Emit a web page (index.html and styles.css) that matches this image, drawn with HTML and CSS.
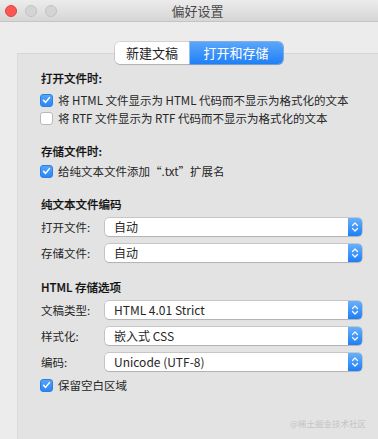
FILE: index.html
```html
<!DOCTYPE html>
<html lang="zh-CN">
<head>
<meta charset="utf-8">
<title>偏好设置</title>
<link rel="stylesheet" href="styles.css">
</head>
<body>
<div class="window">
  <header class="titlebar">
    <div class="lights">
      <span class="light red"></span>
      <span class="light"></span>
      <span class="light"></span>
    </div>
    <div class="title">偏好设置</div>
  </header>
  <div class="content">
    <div class="tabs">
      <span class="tab">新建文稿</span>
      <span class="tab active">打开和存储</span>
    </div>
    <div class="panel">
      <h3 class="heading">打开文件时:</h3>
      <div class="check"><span class="box on"><svg viewBox="0 0 12 12" width="12" height="12"><path d="M2.8 6.3 L5 8.6 L9.2 3.4" fill="none" stroke="#fff" stroke-width="1.7" stroke-linecap="round" stroke-linejoin="round"/></svg></span>将 HTML 文件显示为 HTML 代码而不显示为格式化的文本</div>
      <div class="check"><span class="box"></span>将 RTF 文件显示为 RTF 代码而不显示为格式化的文本</div>

      <h3 class="heading sec">存储文件时:</h3>
      <div class="check tight"><span class="box on"><svg viewBox="0 0 12 12" width="12" height="12"><path d="M2.8 6.3 L5 8.6 L9.2 3.4" fill="none" stroke="#fff" stroke-width="1.7" stroke-linecap="round" stroke-linejoin="round"/></svg></span>给纯文本文件添加“.txt”扩展名</div>

      <h3 class="heading sec2">纯文本文件编码</h3>
      <div class="form">
        <div class="row first"><span class="label">打开文件:</span><div class="select"><span class="value">自动</span><span class="stepper"><svg viewBox="0 0 14 18" width="14" height="18"><path d="M4.5 7.5 L7 5 L9.5 7.5 M4.5 10.5 L7 13 L9.5 10.5" fill="none" stroke="#fff" stroke-width="1.2" stroke-linecap="round" stroke-linejoin="round"/></svg></span></div></div>
        <div class="row"><span class="label">存储文件:</span><div class="select"><span class="value">自动</span><span class="stepper"><svg viewBox="0 0 14 18" width="14" height="18"><path d="M4.5 7.5 L7 5 L9.5 7.5 M4.5 10.5 L7 13 L9.5 10.5" fill="none" stroke="#fff" stroke-width="1.2" stroke-linecap="round" stroke-linejoin="round"/></svg></span></div></div>
      </div>

      <h3 class="heading sec3">HTML 存储选项</h3>
      <div class="form">
        <div class="row first"><span class="label">文稿类型:</span><div class="select"><span class="value">HTML 4.01 Strict</span><span class="stepper"><svg viewBox="0 0 14 18" width="14" height="18"><path d="M4.5 7.5 L7 5 L9.5 7.5 M4.5 10.5 L7 13 L9.5 10.5" fill="none" stroke="#fff" stroke-width="1.2" stroke-linecap="round" stroke-linejoin="round"/></svg></span></div></div>
        <div class="row"><span class="label">样式化:</span><div class="select"><span class="value">嵌入式 CSS</span><span class="stepper"><svg viewBox="0 0 14 18" width="14" height="18"><path d="M4.5 7.5 L7 5 L9.5 7.5 M4.5 10.5 L7 13 L9.5 10.5" fill="none" stroke="#fff" stroke-width="1.2" stroke-linecap="round" stroke-linejoin="round"/></svg></span></div></div>
        <div class="row"><span class="label">编码:</span><div class="select"><span class="value">Unicode (UTF-8)</span><span class="stepper"><svg viewBox="0 0 14 18" width="14" height="18"><path d="M4.5 7.5 L7 5 L9.5 7.5 M4.5 10.5 L7 13 L9.5 10.5" fill="none" stroke="#fff" stroke-width="1.2" stroke-linecap="round" stroke-linejoin="round"/></svg></span></div></div>
      </div>
      <div class="check after"><span class="box on"><svg viewBox="0 0 12 12" width="12" height="12"><path d="M2.8 6.3 L5 8.6 L9.2 3.4" fill="none" stroke="#fff" stroke-width="1.7" stroke-linecap="round" stroke-linejoin="round"/></svg></span>保留空白区域</div>

      <div class="watermark">@稀土掘金技术社区</div>
    </div>
  </div>
</div>
</body>
</html>
```
FILE: styles.css
```css
html, body {
  margin: 0;
  padding: 0;
  width: 378px;
  height: 439px;
  overflow: hidden;
  background: #ececec;
}
body {
  font-family: "Noto Sans CJK SC", "Noto Sans", sans-serif;
  font-size: 11.5px;
  color: #262626;
}
.window {
  width: 395px;
  height: 439px;
  background: #ececec;
  display: flex;
  flex-direction: column;
}
.titlebar {
  height: 22px;
  flex: none;
  box-sizing: border-box;
  background: linear-gradient(#ececec, #d6d6d6);
  border-bottom: 1px solid #c4c4c4;
  display: grid;
  grid-template-columns: 1fr;
  align-items: center;
}
.lights, .title {
  grid-row: 1;
  grid-column: 1;
}
.lights {
  display: flex;
  gap: 8px;
  padding-left: 5px;
  align-items: center;
}
.light {
  width: 12px;
  height: 12px;
  border-radius: 50%;
  box-sizing: border-box;
  background: #d4d4d4;
  border: 1px solid #c2c2c2;
}
.light.red {
  background: #fc5753;
  border-color: #e0443e;
}
.title {
  text-align: center;
  font-size: 13px;
  color: #4a4a4a;
  line-height: 21px;
}
.content {
  flex: 1;
  display: flex;
  flex-direction: column;
  padding: 20px 17px 0 17px;
  min-height: 0;
}
.tabs {
  align-self: center;
  display: flex;
  height: 22px;
  margin-bottom: -11px;
  position: relative;
  z-index: 1;
  border-radius: 5px;
  box-shadow: 0 0 0 0.5px rgba(0,0,0,0.22), 0 1px 1px rgba(0,0,0,0.12);
  font-size: 13px;
  transform: translateX(1px);
}
.tab {
  display: flex;
  align-items: center;
  justify-content: center;
  line-height: 22px;
  color: #1f1f1f;
  background: #fff;
}
.tab:first-child {
  width: 75px;
  border-radius: 5px 0 0 5px;
}
.tab.active {
  width: 93px;
  color: #fff;
  background: linear-gradient(#5aa6fa, #1f80f6);
  border-radius: 0 5px 5px 0;
  box-shadow: 0 0 0 1px rgba(70,140,230,0.55);
}
.panel {
  flex: 1;
  background: #e3e3e3;
  border-top: 1px solid #d6d6d6;
  border-left: 1px solid #dadada;
  padding: 15px 16px 0 23px;
  display: flex;
  flex-direction: column;
}
.heading {
  margin: 0;
  font-size: 11.5px;
  font-weight: 500;
  line-height: 18px;
  color: #111;
  -webkit-text-stroke: 0.2px #111;
}
.heading.sec { margin-top: 15px; }
.heading.sec2 { margin-top: 15px; }
.heading.sec3 { margin-top: 16px; }
.check {
  display: flex;
  align-items: center;
  gap: 5px;
  height: 18px;
  line-height: 18px;
  color: #262626;
  white-space: nowrap;
}
.check:nth-of-type(1) { margin-top: 4px; }
.check.tight { margin-top: 2px; }
.check.after { margin-top: 5px; }
.box {
  width: 13px;
  height: 13px;
  flex: none;
  box-sizing: border-box;
  border-radius: 3px;
  background: #fff;
  border: 1px solid #b9b9b9;
  display: flex;
  align-items: center;
  justify-content: center;
  margin-left: -1px;
}
.box.on {
  background: linear-gradient(#55a3fb, #2a86f7);
  border-color: #2f7fe0;
}
.form {
  display: flex;
  flex-direction: column;
  gap: 8px;
  margin-top: 5px;
}
.row {
  display: grid;
  grid-template-columns: 64px 1fr;
  align-items: center;
  height: 18px;
}
.label {
  color: #262626;
  line-height: 18px;
}
.select {
  height: 18px;
  box-sizing: border-box;
  display: flex;
  background: #fff;
  border-radius: 4px;
  box-shadow: 0 0 0 0.5px rgba(0,0,0,0.25), 0 1px 1px rgba(0,0,0,0.1);
  overflow: hidden;
}
.value {
  flex: 1;
  padding-left: 9px;
  line-height: 18px;
  font-size: 12px;
  color: #262626;
}
.stepper {
  width: 14px;
  flex: none;
  background: linear-gradient(#68b0fb, #1d7ff6);
  display: flex;
  align-items: center;
  justify-content: center;
}
.watermark {
  margin-top: 20px;
  margin-right: -4px;
  align-self: flex-end;
  font-size: 8.5px;
  line-height: 18px;
  color: #c4c4c4;
}
```
